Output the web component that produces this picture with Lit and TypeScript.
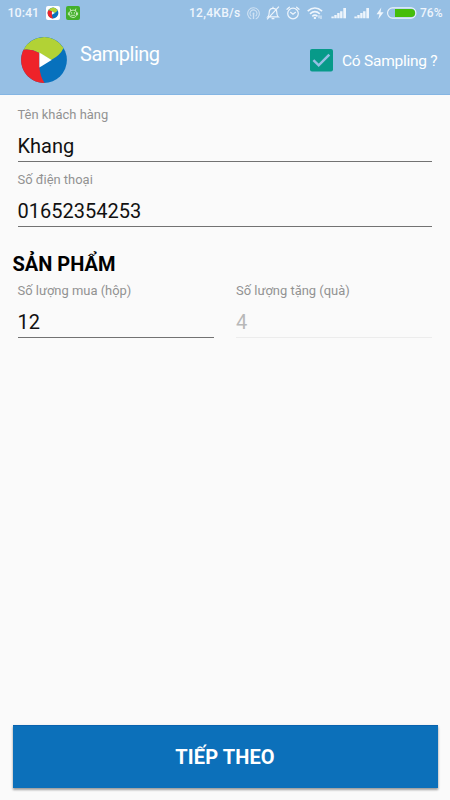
import { LitElement, html, css, svg } from "lit";
import { customElement, property } from "lit/decorators.js";

const logoShape = svg`
  <circle cx="22.5" cy="22.5" r="22.4" fill="#0771bd"/>
  <path d="M2.46 12.5A22.4 22.4 0 0 1 41.6 10.8Q38.4 18 29.5 22.5L18 15.6Q10 11.5 2.46 12.5Z" fill="#b2d235"/>
  <path d="M2.46 12.5Q10 11.5 18 15.6V29.5Q18.6 38 23 44.9A22.4 22.4 0 0 1 2.46 12.5Z" fill="#ee2329"/>
  <path d="M18 15.2L30 22.5L18 29.8Z" fill="#fff"/>`;

@customElement("status-bar")
export class StatusBar extends LitElement {
  static styles = css`
    :host { display: flex; align-items: center; height: 26px; color: #eef5fc; font: 500 12px/26px Roboto, sans-serif; }
    svg { display: block; flex: none; }
    .time { width: 33px; margin-left: 7.5px; font-size: 12.5px; white-space: nowrap; }
    .app { margin-left: 5.5px; }
    .android { margin-left: 6px; }
    .speed { width: 51px; margin-left: 109px; font-size: 12px; letter-spacing: 0.3px; white-space: nowrap; }
    .cast { margin-left: 7px; opacity: 0.65; }
    .bell { margin-left: 6px; }
    .alarm { margin-left: 6px; }
    .wifi { margin-left: 7px; }
    .signal { margin-left: 7px; }
    .signal2 { margin-left: 7px; }
    .bolt { margin-left: 6px; }
    .battery { margin-left: 3px; }
    .percent { margin-left: 3px; font-size: 12px; white-space: nowrap; }
  `;
  private signal(cls: string) {
    return html`<svg class=${cls} width="16" height="12" viewBox="0 0 16 12" fill="currentColor">
      <path d="M.4 9.5h2.4v1.8H.4zM3.3 8h2.4v3.3H3.3zM6.2 6h2.4v5.3H6.2zM9.1 4.3h2.4v7H9.1z"/><path d="M12.3 1h2.7v10.3h-2.7z"/></svg>`;
  }
  render() {
    return html`
      <span class="time">10:41</span>
      <svg class="app" width="14" height="14" viewBox="0 0 14 14"><rect width="14" height="14" rx="2" fill="#fff"/>
        <g transform="translate(1.6 1.6) scale(.24)">${logoShape}</g></svg>
      <svg class="android" width="14" height="14" viewBox="0 0 14 14"><rect width="14" height="14" rx="2" fill="#43b02a"/>
        <g fill="none" stroke="#dff5d8" stroke-width=".8" stroke-linecap="round"><circle cx="7" cy="7.8" r="3.7"/><path d="M4.8 4.7L4.2 3M9.2 4.7L9.8 3M2.4 6.8v2M11.6 6.8v2M5 9.1q1 1 2 0q1 1 2 0"/></g>
        <g fill="#dff5d8"><circle cx="5.6" cy="6.9" r=".7"/><circle cx="8.4" cy="6.9" r=".7"/></g></svg>
      <span class="speed">12,4KB/s</span>
      <svg class="cast" width="13" height="13" viewBox="0 0 13 13" fill="none" stroke="currentColor" stroke-width="1.1">
        <path d="M4.3 11.9a5.8 5.8 0 1 1 4.4 0M4.4 9.2a3.5 3.5 0 1 1 4.2 0"/><circle cx="6.5" cy="6.5" r="1" fill="currentColor" stroke="none"/><path d="M6.5 7v5" stroke-width="1.4"/></svg>
      <svg class="bell" width="14" height="14" viewBox="0 0 14 14" fill="none" stroke="currentColor" stroke-width="1.2">
        <path d="M1.8 10.9c1.2-1 1.4-2 1.4-4.4C3.2 3.8 4.6 2.3 7 2.3s3.8 1.5 3.8 4.2c0 2.4.2 3.4 1.5 4.4ZM7 .8v1.5M5.6 12.7h2.8M12.9.6L1 13.4"/></svg>
      <svg class="alarm" width="14" height="14" viewBox="0 0 14 14" fill="none" stroke="currentColor" stroke-width="1.2" stroke-linecap="round">
        <circle cx="7" cy="7.5" r="5.3"/><path d="M1 3.3L3.4 1.2M13 3.3L10.6 1.2M4.5 6.3L7 8.3L9.5 6.3"/></svg>
      <svg class="wifi" width="17" height="14" viewBox="0 0 17 14" fill="none" stroke="currentColor" stroke-width="1.6">
        <path d="M.7 5.2Q7.9-1.2 15.1 5.2M3 7.8Q7.9 3.4 12.8 7.8M5.3 10.3Q7.9 8 10.5 10.3"/><circle cx="7.9" cy="11.9" r="1.2" fill="currentColor" stroke="none"/><path d="M12 9.3v3M14 9.5v3.5" stroke-width="1"/></svg>
      ${this.signal("signal")}${this.signal("signal2")}
      <svg class="bolt" width="8" height="13" viewBox="0 0 7 12" fill="currentColor"><path d="M4.7.5L.3 6.6H3L1.9 11.4L6.8 4.8H4Z"/></svg>
      <svg class="battery" width="30" height="12" viewBox="0 0 30 12"><rect x=".6" y=".9" width="28.3" height="10.2" rx="4.8" fill="none" stroke="#eef5fb" stroke-width="1.1"/>
        <path d="M8 2H24.2a3.9 4 0 0 1 0 8H8Z" fill="#45bd0b"/></svg>
      <span class="percent">76%</span>`;
  }
}

@customElement("text-field")
export class TextField extends LitElement {
  @property() label = "";
  @property() value = "";
  @property({ type: Boolean, reflect: true }) disabled = false;
  static styles = css`
    :host { display: block; height: 65px; font-family: Roboto, sans-serif; }
    .label { height: 19px; font-size: 12.95px; line-height: 18px; color: #929292; white-space: nowrap; }
    .value { height: 36px; border-bottom: 1px solid #727272; font-size: 20px; line-height: 43px; color: #111; white-space: nowrap; }
    :host([disabled]) .value { color: #b8b8b8; border-color: #ececec; }
  `;
  render() {
    return html`<div class="label">${this.label}</div><div class="value">${this.value}</div>`;
  }
}

@customElement("app-root")
export class AppRoot extends LitElement {
  static styles = css`
    :host { display: flex; flex-direction: column; box-sizing: border-box; height: 800px; overflow: hidden; background: #fafafa; font-family: Roboto, sans-serif; }
    header { height: 95px; box-sizing: border-box; background: #96bfe4; border-bottom: 1px solid #84b5e3; color: #fff; flex: none; }
    .bar { display: flex; height: 68px; align-items: center; }
    .logo { display: block; margin-left: 21px; }
    .title { margin: 0 auto 13px 13px; font-size: 20px; letter-spacing: -0.5px; line-height: 24px; }
    .box { display: block; margin-right: 9px; }
    .check { width: 96px; font-size: 15.5px; letter-spacing: -0.25px; line-height: 20px; margin: 2px 12px 0 0; white-space: nowrap; }
    .form { padding: 11px 17.6px 0 17.5px; }
    h2 { margin: 14px 0 4px -5px; font-size: 20px; line-height: 28px; font-weight: 700; color: #000; }
    .row { display: grid; grid-template-columns: 196px 196px; column-gap: 22.5px; }
    button { margin: auto 12.5px 12.5px; height: 62.5px; flex: none; border: 0; border-top: 1px solid #0862ae; padding: 0; background: #0c70ba; color: #fff; font: 700 20px/63px Roboto, sans-serif; letter-spacing: 0.1px; box-shadow: 0 2px 2px rgba(0,0,0,.3), 0 1px 3px rgba(0,0,0,.15); }
  `;
  render() {
    return html`
      <header>
        <status-bar></status-bar>
        <div class="bar">
          <svg class="logo" width="46" height="46" viewBox="0 0 45 45">${logoShape}</svg>
          <span class="title">Sampling</span>
          <svg class="box" width="23" height="23" viewBox="0 0 23 23"><rect width="23" height="22.5" rx="2" fill="#079a89"/>
            <path d="M3.4 11.2L8.7 16.3L19.3 5.6" fill="none" stroke="#96bfe4" stroke-width="2.5"/></svg>
          <span class="check">Có Sampling ?</span>
        </div>
      </header>
      <section class="form">
        <text-field label="Tên khách hàng" value="Khang"></text-field>
        <text-field label="Số điện thoại" value="01652354253"></text-field>
        <h2>SẢN PHẨM</h2>
        <div class="row">
          <text-field label="Số lượng mua (hộp)" value="12"></text-field>
          <text-field label="Số lượng tặng (quà)" value="4" disabled></text-field>
        </div>
      </section>
      <button>TIẾP THEO</button>`;
  }
}
